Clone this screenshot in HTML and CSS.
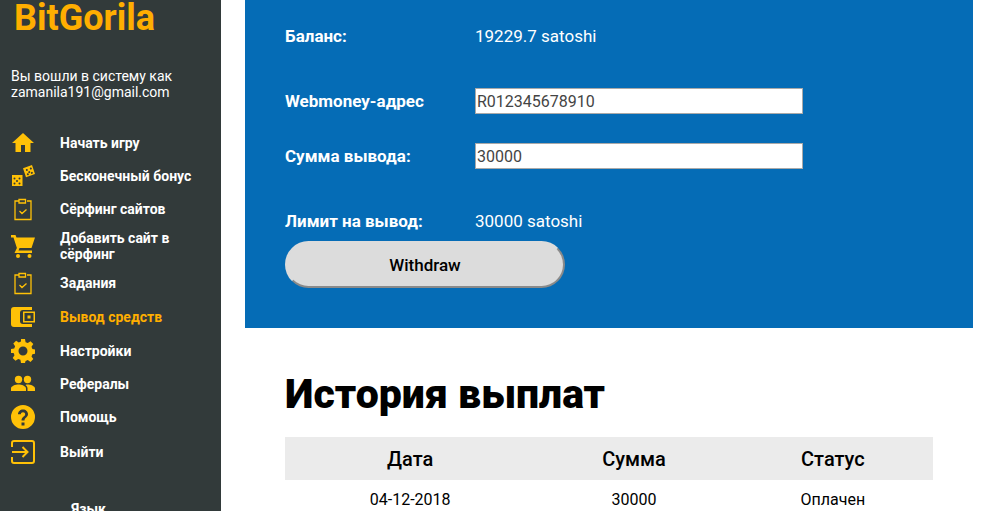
FILE: index.html
```html
<!DOCTYPE html>
<html lang="ru">
<head>
    <meta charset="UTF-8">
    <title>BitGorila</title>
    <link rel="stylesheet" href="styles.css">
</head>
<body>
    <aside class="sidebar">
        <div class="logo">BitGorila</div>
        <div class="user-info">Вы вошли в систему как<br>zamanila191@gmail.com</div>
        <nav class="menu">
            <a class="menu-item">
                <svg class="menu-icon" viewBox="0 0 24 24"><path d="M10 21v-7h4v7h5.5v-9H23L12 2 1 12h3.500v9z"/></svg>
                <span>Начать игру</span>
            </a>
            <a class="menu-item">
                <svg class="menu-icon" viewBox="0 0 24 24"><path fill-rule="evenodd" d="M1 11h10.500v11H1zM3.500 13.500a1 1 0 1 0 0 2 1 1 0 0 0 0-2zm5 0a1 1 0 1 0 0 2 1 1 0 0 0 0-2zm-2.500 2.500a1 1 0 1 0 0 2 1 1 0 0 0 0-2zm-2.500 2.500a1 1 0 1 0 0 2 1 1 0 0 0 0-2zm5 0a1 1 0 1 0 0 2 1 1 0 0 0 0-2z"/><path fill-rule="evenodd" d="M12 4.300 21 1l3 9-9 3.300zM15.500 5a1 1 0 1 0 .7 1.900 1 1 0 0 0-.7-1.900zm4-1.400a1 1 0 1 0 .7 1.900 1 1 0 0 0-.7-1.900zm-1.600 3.600a1 1 0 1 0 .7 1.900 1 1 0 0 0-.7-1.900zm-1.400 2.100a1 1 0 1 0 .7 1.900 1 1 0 0 0-.7-1.900zm4-1.400a1 1 0 1 0 .7 1.900 1 1 0 0 0-.7-1.900z"/></svg>
                <span>Бесконечный бонус</span>
            </a>
            <a class="menu-item">
                <svg class="menu-icon" viewBox="0 0 24 24"><path class="outline" d="M8 4H4v18.500h16V4h-4M8 2.500h6.500V6H8zM8.500 14l2.500 2.500 4.500-4"/></svg>
                <span>Сёрфинг сайтов</span>
            </a>
            <a class="menu-item">
                <svg class="menu-icon" viewBox="0 0 24 24"><path d="M0 1h4.500l1 2.500H24l-3.500 10.500H8.500l-1 2.500H21v2.500H3.500l2.400-5L2.500 3.500H0z"/><circle cx="7" cy="22" r="2"/><circle cx="18.500" cy="22" r="2"/></svg>
                <span>Добавить сайт в сёрфинг</span>
            </a>
            <a class="menu-item">
                <svg class="menu-icon" viewBox="0 0 24 24"><path class="outline" d="M8 4H4v18.500h16V4h-4M8 2.500h6.500V6H8zM8.500 14l2.500 2.500 4.500-4"/></svg>
                <span>Задания</span>
            </a>
            <a class="menu-item active">
                <svg class="menu-icon" viewBox="0 0 24 24"><path fill-rule="evenodd" d="M3 2h18v3h-9a3 3 0 0 0-3 3v8a3 3 0 0 0 3 3h9v3H3a3 3 0 0 1-3-3V5a3 3 0 0 1 3-3zM12 6.500h12v11H12zM13.500 8v8H22.500V8zM16.500 10.500h3v3h-3z"/></svg>
                <span>Вывод средств</span>
            </a>
            <a class="menu-item">
                <svg class="menu-icon" viewBox="0 0 24 24"><path fill-rule="evenodd" d="M10 0h4l.6 3.200 2.200.9L19.500 2.300l2.800 2.800-1.800 2.700.9 2.200 3.200.6v4l-3.200.6-.9 2.200 1.800 2.700-2.800 2.800-2.700-1.800-2.200.9L14 24h-4l-.6-3.200-2.200-.9-2.700 1.800-2.800-2.800 1.800-2.700-.9-2.200L0 14v-4l3.200-.6.9-2.200-1.800-2.700 2.800-2.800 2.700 1.800 2.200-.9zM12 7.500a4.500 4.500 0 1 0 0 9 4.500 4.500 0 0 0 0-9z"/></svg>
                <span>Настройки</span>
            </a>
            <a class="menu-item">
                <svg class="menu-icon" viewBox="0 0 24 24"><circle cx="7.500" cy="7.500" r="3.700"/><circle cx="16.500" cy="7.500" r="3.700"/><path d="M0 19v-2.500c0-2.500 4.500-4 7.500-4s7.500 1.500 7.500 4V19zM16.500 19v-2.500c0-1.500-.8-2.800-2-3.600.7-.2 1.400-.4 2-.4 3 0 7.500 1.500 7.500 4V19z"/></svg>
                <span>Рефералы</span>
            </a>
            <a class="menu-item">
                <svg class="menu-icon" viewBox="0 0 24 24"><path fill-rule="evenodd" d="M12 0a12 12 0 1 1 0 24 12 12 0 0 1 0-24zM10.500 17.500v3h3v-3zM12 4.500c-2.800 0-5 2.100-5 4.800h2.800c0-1.200 1-2.100 2.200-2.100s2.200.9 2.200 2.100c0 2.300-3.700 2.300-3.700 6.200h3c0-2.800 3.500-3.200 3.500-6.200 0-2.700-2.200-4.800-5-4.800z"/></svg>
                <span>Помощь</span>
            </a>
            <a class="menu-item">
                <svg class="menu-icon" viewBox="0 0 24 24"><path class="exit" d="M1 7V3a2 2 0 0 1 2-2h18a2 2 0 0 1 2 2v18a2 2 0 0 1-2 2H3a2 2 0 0 1-2-2v-4M1 12h15M11.500 7l5 5-5 5"/></svg>
                <span>Выйти</span>
            </a>
        </nav>
        <div class="lang">Язык</div>
    </aside>

    <main class="content">
        <section class="panel">
            <div class="row row-balance">
                <div class="row-label">Баланс:</div>
                <div>19229.7 satoshi</div>
            </div>
            <div class="row row-wallet">
                <div class="row-label">Webmoney-адрес</div>
                <input class="field" value="R012345678910">
            </div>
            <div class="row row-sum">
                <div class="row-label">Сумма вывода:</div>
                <input class="field" value="30000">
            </div>
            <div class="row row-limit">
                <div class="row-label">Лимит на вывод:</div>
                <div>30000 satoshi</div>
            </div>
            <button class="withdraw">Withdraw</button>
        </section>

        <section class="history">
            <h1>История выплат</h1>
            <table>
                <thead>
                    <tr><th>Дата</th><th>Сумма</th><th>Статус</th></tr>
                </thead>
                <tbody>
                    <tr><td>04-12-2018</td><td>30000</td><td>Оплачен</td></tr>
                </tbody>
            </table>
        </section>
    </main>
</body>
</html>
```

FILE: styles.css
```css
html,body{
    margin: 0;
    padding: 0;
    height: 100%;
    overflow: hidden;
}
body{
    display: flex;
    background-color: #fff;
    font-family: Roboto, "Liberation Sans", sans-serif;
}
.sidebar{
    width: 221px;
    flex: none;
    background-color: #323a3a;
    color: #fff;
}
.logo{
    margin: -4px 0 0 14px;
    font-size: 36px;
    line-height: 44px;
    font-weight: 700;
    color: #ffae00;
}
.user-info{
    margin: 28px 0 0 11px;
    font-size: 14px;
    line-height: 16px;
}
.menu{
    display: grid;
    grid-template-rows: 32px 33px 33px 41px 34px 33px 35px 32px 33px 38px;
    margin-top: 27px;
}
.menu-item{
    display: flex;
    align-items: center;
    padding-left: 11px;
    font-size: 14px;
    line-height: 16px;
    font-weight: 700;
}
.menu-item span{
    margin-left: 25px;
    width: 140px;
}
.menu-item.active{
    color: #ffae00;
}
.menu-icon{
    width: 24px;
    height: 24px;
    flex: none;
    fill: #ffc107;
}
.outline{
    fill: none;
    stroke: #ffc107;
    stroke-width: 1.300;
}
.exit{
    fill: none;
    stroke: #ffc107;
    stroke-width: 2;
}
.lang{
    margin: 30px 0 0 71px;
    font-size: 14px;
    font-weight: 700;
}
.content{
    flex: 1;
    padding: 0 21px 0 24px;
}
.panel{
    height: 328px;
    box-sizing: border-box;
    padding: 0 40px;
    background-color: #056cb6;
    color: #fff;
    font-size: 17px;
}
.row{
    display: flex;
    align-items: center;
    height: 26px;
}
.row-label{
    width: 190px;
    font-weight: 700;
}
.row-balance{
    padding-top: 23px;
}
.row-wallet{
    margin-top: 39px;
}
.row-sum{
    margin-top: 29px;
}
.row-limit{
    margin-top: 39px;
}
.field{
    width: 328px;
    height: 26px;
    box-sizing: border-box;
    padding: 0 1px;
    border: 1px solid #a9a9a9;
    background-color: #fff;
    color: #444;
    font-family: Roboto, sans-serif;
    font-size: 16px;
}
.withdraw{
    display: block;
    width: 280px;
    height: 47px;
    margin-top: 7px;
    padding: 0;
    border: 2px solid #dcdcdc;
    border-right-color: #8a8a8a;
    border-bottom-color: #8a8a8a;
    border-radius: 24px;
    background-color: #dcdcdc;
    color: #000;
    font-family: Roboto, sans-serif;
    font-size: 17px;
    font-weight: 500;
}
.history{
    padding: 0 40px;
}
h1{
    margin: 42px 0 0;
    font-size: 41px;
    line-height: 48px;
    font-weight: 900;
    color: #000;
}
table{
    width: 648px;
    margin-top: 19px;
    border-collapse: collapse;
    color: #000;
}
th{
    height: 43px;
    padding: 0;
    background-color: #ebebeb;
    font-size: 20px;
    font-weight: 500;
}
td{
    height: 38px;
    padding: 0;
    text-align: center;
    font-size: 16px;
}
```
